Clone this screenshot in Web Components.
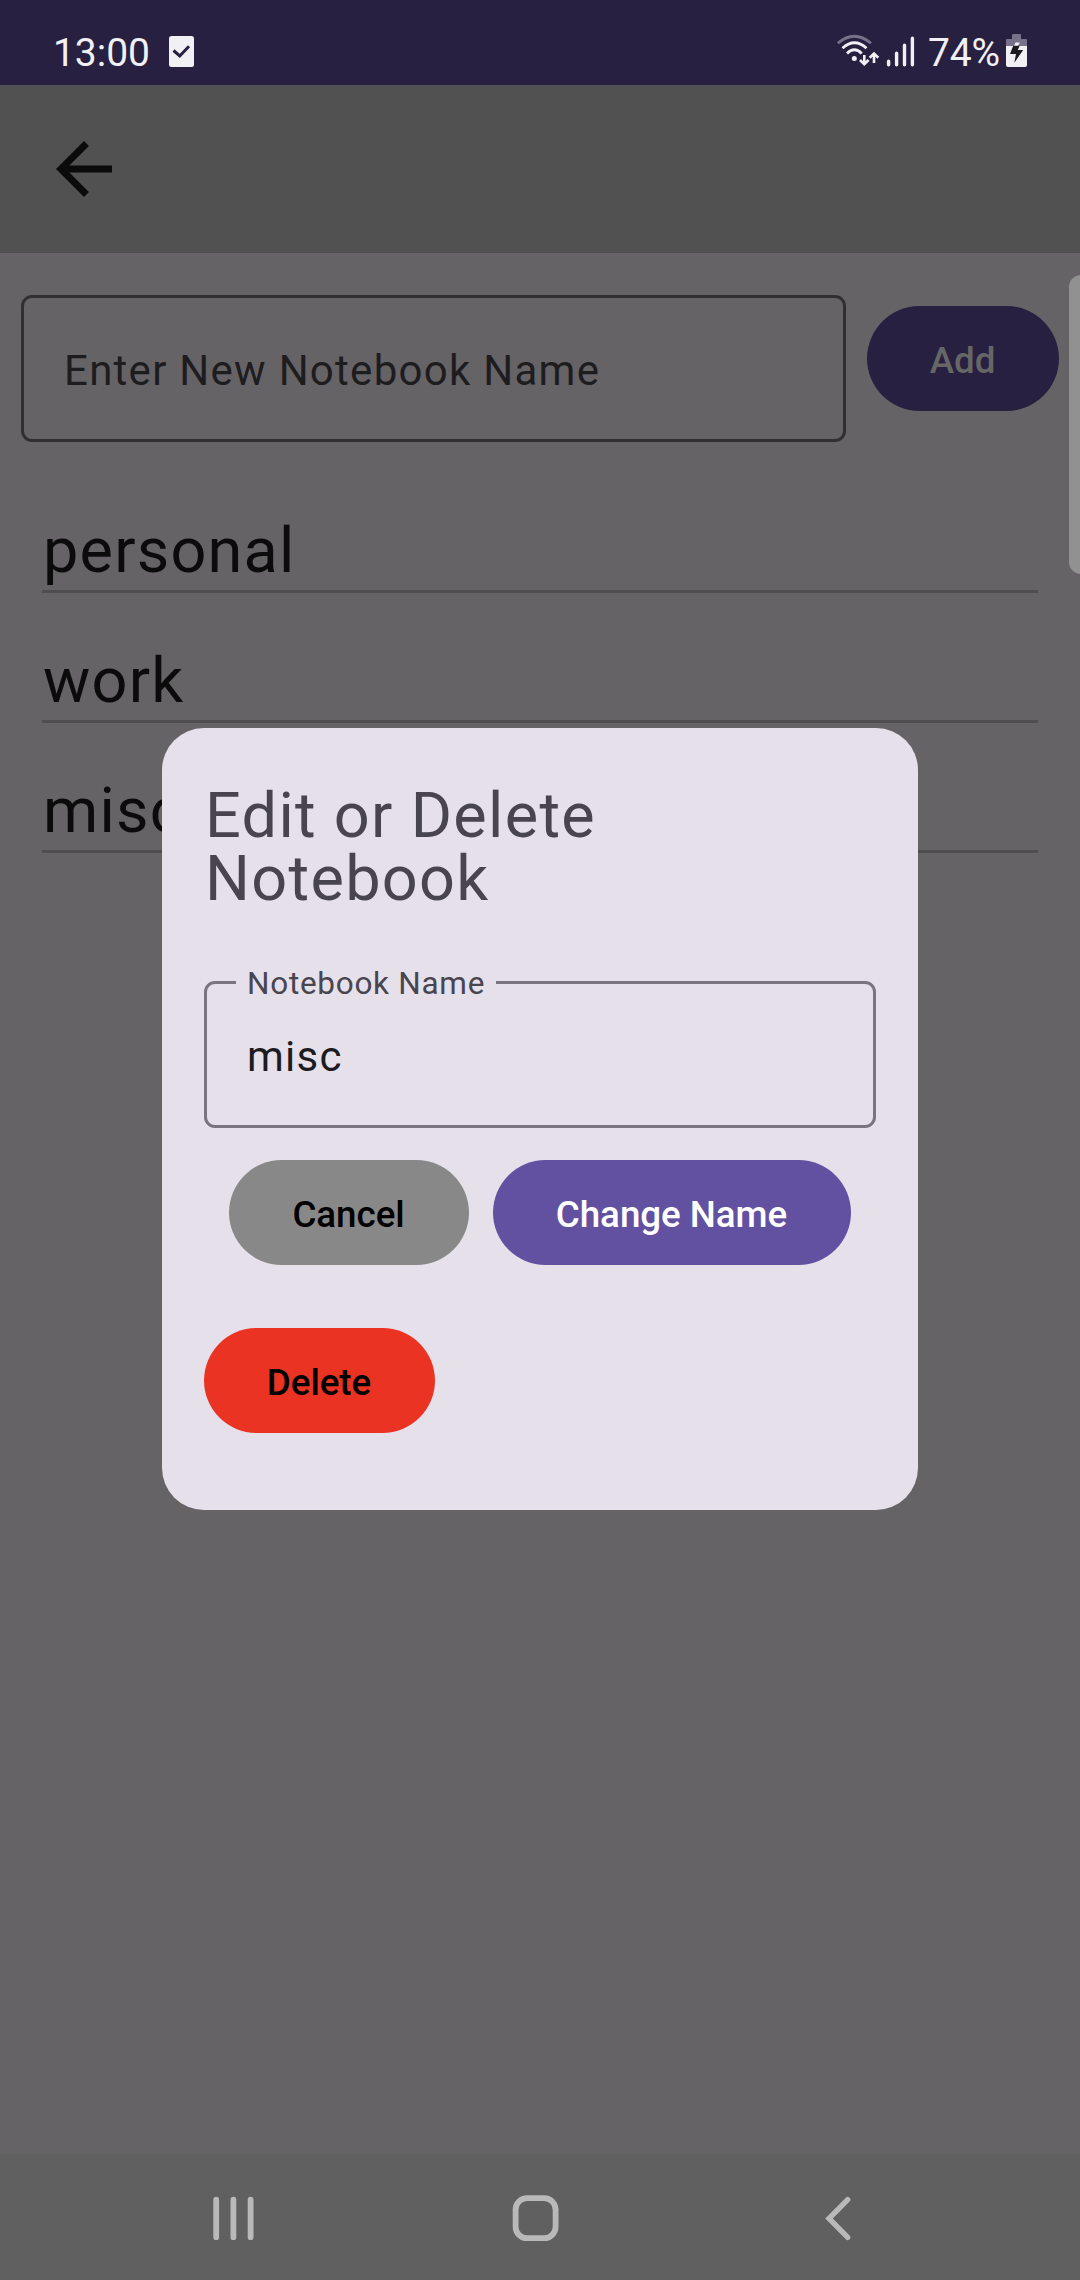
<!DOCTYPE html>
<html lang="en">
<head>
<meta charset="utf-8">
<title>Notebooks</title>
<style>
html,body{margin:0;padding:0}
body{width:1080px;height:2280px;overflow:hidden;font-family:Roboto,"Noto Sans",sans-serif}
</style>
</head>
<body>
<notebook-screen></notebook-screen>
<script>
function define(name, html) {
  const t = document.createElement('template');
  t.innerHTML = html;
  customElements.define(name, class extends HTMLElement {
    constructor() {
      super();
      this.attachShadow({ mode: 'open' }).appendChild(t.content.cloneNode(true));
    }
  });
}

define('status-bar', `
<style>
:host{display:flex;height:85px;box-sizing:border-box;background:#282040;color:#f1f0f4;padding:0 52px 0 53px;align-items:flex-start;font-size:39px;line-height:46px}
span{margin-top:29.5px;white-space:nowrap}
svg{display:block;flex:none}
.time{width:116px;letter-spacing:-.05px}
.pct{width:78px;margin-left:12px;letter-spacing:-.2px}
.note{margin-top:36px}
.sp{flex:1}
.net{margin-top:30px}
.bat{margin-top:34px}
</style>
<span class="time">13:00</span>
<svg class="note" width="25" height="31" viewBox="0 0 25 31"><rect width="25" height="31" rx="2.5" fill="#f1f0f4"/><path d="M4.5 14.5L10.8 20L20 10.3" fill="none" stroke="#282040" stroke-width="3"/></svg>
<div class="sp"></div>
<svg class="net" width="80" height="40" viewBox="836 30 80 40" fill="none" stroke="#f1f0f4">
<path d="M837.8 43.3Q854.3 29.3 871 43.3" stroke="#77728a" stroke-width="2.8"/>
<path d="M842.5 48.3Q854.5 37.3 866.5 48.3" stroke-width="2.8"/>
<path d="M847 53.4Q854.3 46.3 861.7 53.4" stroke-width="2.8"/>
<circle cx="854.3" cy="58.5" r="2.5" fill="#f1f0f4" stroke="none"/>
<path d="M864.3 55V64M860 60L864.3 64.2L868.6 60M874 63V54M869.7 57.8L874 53.6L878.3 57.8" stroke-width="2.6"/>
<path d="M888.6 61.3V64.7M896.6 53.3V64.7M904.5 45.3V64.7M912.4 38.2V64.7" stroke-width="3.4" stroke-linecap="round"/>
</svg>
<span class="pct">74%</span>
<svg class="bat" width="22" height="33" viewBox="0 0 22 33"><path d="M6 5V1Q6 0 7 0H14Q15 0 15 1V5H20Q21 5 21 6V12H0V6Q0 5 1 5Z" fill="#77728a"/><path d="M0 12H8L9.5 8.5H13.8L12 12H21V31Q21 33 19 33H2Q0 33 0 31Z" fill="#f1f0f4"/><path d="M7.2 11.7H13.7L11.8 16H17.2L8.3 28.7L10 20H4Z" fill="#1b1b1d"/></svg>
`);

define('app-bar', `
<style>:host{display:flex;align-items:center;height:168px;box-sizing:border-box;padding-left:42px;background:#515151}svg{display:block}</style>
<svg width="84" height="84" viewBox="0 0 24 24" fill="#0b0b0b"><path d="M20 11H7.83l5.59-5.59L12 4l-8 8 8 8 1.41-1.41L7.83 13H20v-2z"/></svg>
`);

define('text-field', `
<style>
:host{display:flex;align-items:center;position:relative;height:147px;box-sizing:border-box;border:3px solid var(--line);border-radius:11px;padding:4px 39px 0 40px;font-size:42px;letter-spacing:1.27px;color:var(--ink);white-space:nowrap}
::slotted([slot=label]){position:absolute;left:29px;top:-20px;width:260px;box-sizing:border-box;padding-left:11px;line-height:40px;font-size:31.5px;letter-spacing:.72px;color:#49454f;background:#e6e0eb}
</style>
<slot name="label"></slot><slot></slot>
`);

define('pill-button', `
<style>
:host{display:flex;align-items:center;justify-content:center;flex:none;height:105px;box-sizing:border-box;padding:4px 1px 0 0;border-radius:53px;background:var(--fill);color:var(--ink);font-size:36.75px;font-weight:500;letter-spacing:-.05px;white-space:nowrap}
</style><slot></slot>
`);

define('notebook-row', `
<style>
:host{display:flex;align-items:flex-end;height:130px;box-sizing:border-box;border-bottom:3px solid #4f4d50;padding:0 0 8px 1px;font-size:63px;line-height:63px;letter-spacing:1.2px;color:#0b0b0b}
</style><slot></slot>
`);

define('notebook-dialog', `
<style>
:host{display:block;box-sizing:border-box;width:756px;height:782px;border-radius:42px;background:#e6e0eb;padding:56px 42px 0}
h1{margin:0 0 71px;padding-left:1px;font-size:63px;line-height:63px;font-weight:400;letter-spacing:1.3125px;color:#49454f}
text-field{--line:#79747e;--ink:#1c1b1f}
.actions{display:flex;justify-content:center;gap:24px;margin:32px 0 63px}
.cancel{--fill:#888;--ink:#000;width:240px}
.change{--fill:#6250a0;--ink:#fff;width:358px}
.delete{--fill:#eb3324;--ink:#000;width:231px}
</style>
<h1>Edit or Delete Notebook</h1>
<text-field><span slot="label">Notebook Name</span>misc</text-field>
<div class="actions"><pill-button class="cancel">Cancel</pill-button><pill-button class="change">Change Name</pill-button></div>
<pill-button class="delete">Delete</pill-button>
`);

define('nav-bar', `
<style>
:host{display:flex;height:126px;box-sizing:border-box;background:#606060;padding:40px 0 0 210px}
svg{display:block;flex:none}
.home{margin:0 262px 0 252px}
</style>
<svg width="48" height="50" viewBox="210 2194 48 50" stroke="#b9b9b9" stroke-width="5.8" stroke-linecap="round"><path d="M216.2 2199.7V2237.2M233.4 2199.7V2237.2M250.6 2199.7V2237.2"/></svg>
<svg class="home" width="50" height="50" viewBox="510 2194 50 50" fill="none" stroke="#b9b9b9" stroke-width="5.8"><rect x="515.6" y="2198.2" width="40" height="40" rx="11.5"/></svg>
<svg width="32" height="50" viewBox="822 2194 32 50" fill="none" stroke="#b9b9b9" stroke-width="5.4" stroke-linecap="round"><path d="M847.7 2199.7L829 2218.5L847.7 2237.3"/></svg>
`);

define('notebook-screen', `
<style>
:host{display:flex;flex-direction:column;position:relative;width:1080px;height:2280px;background:#666366;overflow:hidden}
main{flex:1;padding-top:42px}
.new{display:flex;gap:21px;padding:0 21px 21px}
.new text-field{flex:1;--line:#302f32;--ink:#1d1c1f}
.new pill-button{width:192px;margin-top:11px;--fill:#282040;--ink:#666}
.list{padding:0 42px}
.handle{position:absolute;left:1069px;top:275px;width:24px;height:299px;border-radius:12px;background:#929192}
notebook-dialog{position:absolute;left:162px;top:728px}
</style>
<status-bar></status-bar>
<app-bar></app-bar>
<main>
<div class="new"><text-field>Enter New Notebook Name</text-field><pill-button>Add</pill-button></div>
<div class="list"><notebook-row>personal</notebook-row><notebook-row>work</notebook-row><notebook-row>misc</notebook-row></div>
</main>
<nav-bar></nav-bar>
<div class="handle"></div>
<notebook-dialog></notebook-dialog>
`);
</script>
</body>
</html>
